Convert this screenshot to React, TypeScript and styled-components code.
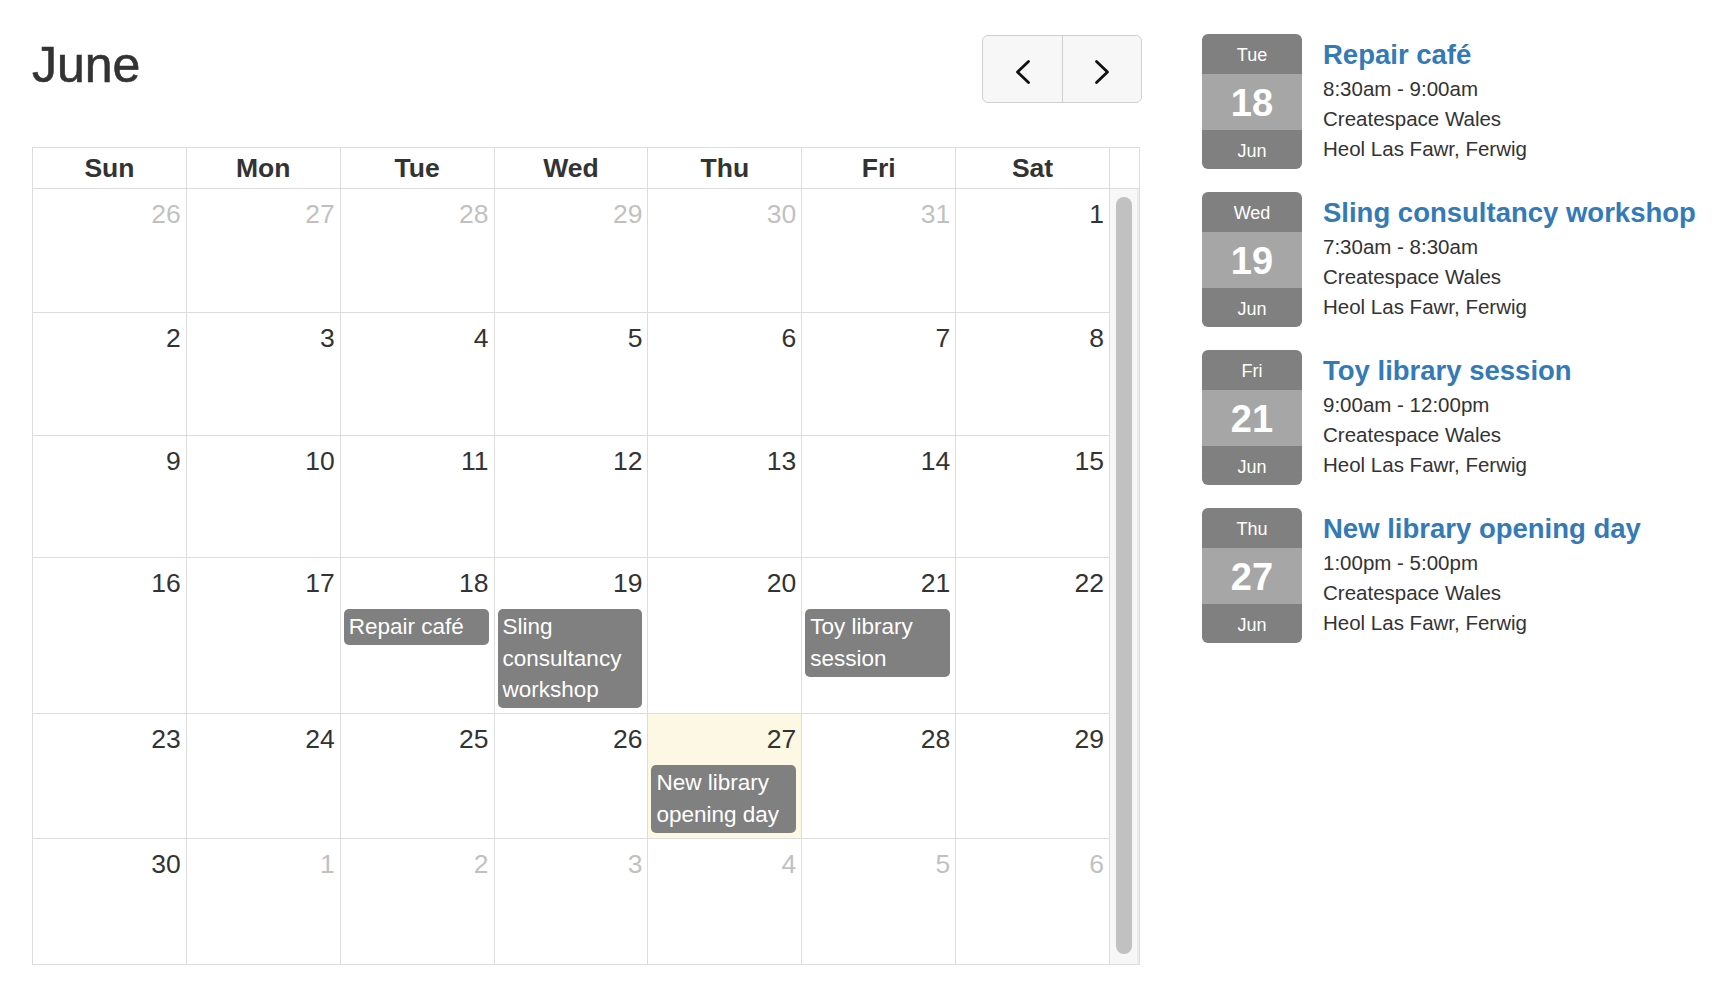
import styled, { createGlobalStyle } from 'styled-components'

type CalEvent = { title: string }
type Day = { n: number; other?: boolean; today?: boolean; events?: CalEvent[] }

const weekNames = ['Sun', 'Mon', 'Tue', 'Wed', 'Thu', 'Fri', 'Sat']

const range = (from: number, to: number, other = false): Day[] =>
  Array.from({ length: to - from + 1 }, (_, i) => ({ n: from + i, other }))

const weeks: Day[][] = [
  [...range(26, 31, true), { n: 1 }],
  range(2, 8),
  range(9, 15),
  [
    { n: 16 },
    { n: 17 },
    { n: 18, events: [{ title: 'Repair café' }] },
    { n: 19, events: [{ title: 'Sling consultancy workshop' }] },
    { n: 20 },
    { n: 21, events: [{ title: 'Toy library session' }] },
    { n: 22 }
  ],
  [
    { n: 23 },
    { n: 24 },
    { n: 25 },
    { n: 26 },
    { n: 27, today: true, events: [{ title: 'New library opening day' }] },
    { n: 28 },
    { n: 29 }
  ],
  [{ n: 30 }, ...range(1, 6, true)]
]

const upcoming = [
  { dow: 'Tue', day: 18, title: 'Repair café', time: '8:30am - 9:00am' },
  { dow: 'Wed', day: 19, title: 'Sling consultancy workshop', time: '7:30am - 8:30am' },
  { dow: 'Fri', day: 21, title: 'Toy library session', time: '9:00am - 12:00pm' },
  { dow: 'Thu', day: 27, title: 'New library opening day', time: '1:00pm - 5:00pm' }
]

const Chevron = ({ dir }: { dir: 'left' | 'right' }) => (
  <svg width="20" height="26" viewBox="0 0 20 26" fill="none">
    <polyline
      points={dir === 'left' ? '15.5,2.5 4.5,13 15.5,23.5' : '4.5,2.5 15.5,13 4.5,23.5'}
      stroke="#111"
      strokeWidth="2.8"
      strokeLinecap="round"
      strokeLinejoin="round"
    />
  </svg>
)

const App = () => {
  return (
    <Page>
      <GlobalStyle />
      <Calendar>
        <Toolbar>
          <MonthTitle>June</MonthTitle>
          <ButtonGroup>
            <NavButton aria-label="prev">
              <Chevron dir="left" />
            </NavButton>
            <NavButton aria-label="next">
              <Chevron dir="right" />
            </NavButton>
          </ButtonGroup>
        </Toolbar>
        <Table>
          <HeadRow>
            {weekNames.map((d) => (
              <HeadCell key={d}>{d}</HeadCell>
            ))}
            <HeadSpacer />
          </HeadRow>
          <Body>
            <Weeks>
              {weeks.map((week, wi) => (
                <Week key={wi}>
                  {week.map((day, di) => (
                    <DayCell key={di} $today={!!day.today}>
                      <DayNumber $other={!!day.other}>{day.n}</DayNumber>
                      {day.events?.map((ev) => (
                        <EventChip key={ev.title}>{ev.title}</EventChip>
                      ))}
                    </DayCell>
                  ))}
                </Week>
              ))}
            </Weeks>
            <ScrollTrack>
              <ScrollThumb />
            </ScrollTrack>
          </Body>
        </Table>
      </Calendar>

      <EventList>
        {upcoming.map((ev) => (
          <EventItem key={ev.title}>
            <DateBadge>
              <BadgeDow>{ev.dow}</BadgeDow>
              <BadgeDay>{ev.day}</BadgeDay>
              <BadgeMonth>Jun</BadgeMonth>
            </DateBadge>
            <EventInfo>
              <EventTitle href="#">{ev.title}</EventTitle>
              <EventLine>{ev.time}</EventLine>
              <EventLine>Createspace Wales</EventLine>
              <EventLine>Heol Las Fawr, Ferwig</EventLine>
            </EventInfo>
          </EventItem>
        ))}
      </EventList>
    </Page>
  )
}

const GlobalStyle = createGlobalStyle`
  body {
    margin: 0;
    background: #fff;
    color: #333;
    font-family: "Liberation Sans", Arial, Helvetica, sans-serif;
  }
  * {
    box-sizing: border-box;
  }
`

const Page = styled.div`
  display: flex;
  align-items: flex-start;
  gap: 62px;
  padding: 34px 0 0 32px;
`

const Calendar = styled.div`
  width: 1108px;
  flex: none;
`

const Toolbar = styled.div`
  display: flex;
  justify-content: space-between;
  align-items: flex-start;
  margin: 1px -2px 44px 0;
`

const MonthTitle = styled.h2`
  margin: 3px 0 0;
  font-size: 50px;
  font-weight: 500;
  line-height: 1.1;
  color: #333;
  -webkit-text-stroke: 0.6px #333;
`

const ButtonGroup = styled.div`
  display: flex;
  height: 68px;
  border: 1px solid #cfcfcf;
  border-radius: 6px;
  overflow: hidden;
  background: #f7f7f7;
`

const NavButton = styled.button`
  width: 79px;
  display: flex;
  align-items: center;
  justify-content: center;
  padding: 5px 0 0;
  border: none;
  background: transparent;
  cursor: pointer;
  & + & {
    border-left: 1px solid #cfcfcf;
  }
`

const Table = styled.div`
  border: 1px solid #ddd;
`

const HeadRow = styled.div`
  display: grid;
  grid-template-columns: repeat(7, 1fr) 29px;
  border-bottom: 1px solid #ddd;
`

const HeadCell = styled.div`
  height: 40px;
  line-height: 40px;
  text-align: center;
  font-size: 26.5px;
  font-weight: bold;
  color: #333;
  border-right: 1px solid #ddd;
`

const HeadSpacer = styled.div``

const Body = styled.div`
  display: flex;
`

const Weeks = styled.div`
  flex: 1;
  display: flex;
  flex-direction: column;
`

const Week = styled.div`
  display: grid;
  grid-template-columns: repeat(7, 1fr);
  min-height: 122.5px;
  border-bottom: 1px solid #ddd;
  &:first-child {
    min-height: 124px;
  }
  &:last-child {
    border-bottom: none;
    min-height: 125px;
  }
`

const DayCell = styled.div<{ $today: boolean }>`
  padding: 4px 5px 5px 3px;
  border-right: 1px solid #ddd;
  background: ${({ $today }) => ($today ? '#fcf8e3' : 'transparent')};
`

const DayNumber = styled.div<{ $other: boolean }>`
  text-align: right;
  font-size: 26.5px;
  line-height: 42px;
  color: #333;
  opacity: ${({ $other }) => ($other ? 0.3 : 1)};
`

const EventChip = styled.div`
  margin-top: 5px;
  padding: 2px 5px 2.5px;
  border-radius: 5px;
  background: #808080;
  color: #fff;
  font-size: 22.5px;
  line-height: 31.5px;
`

const ScrollTrack = styled.div`
  width: 29px;
  display: flex;
  padding: 8px 7px 10px 6px;
  background: #f7f7f7;
  box-shadow: inset -2px 0 0 #ececec;
`

const ScrollThumb = styled.div`
  flex: 1;
  border-radius: 8px;
  background: #c1c1c1;
`

const EventList = styled.div`
  display: flex;
  flex-direction: column;
  gap: 23px;
`

const EventItem = styled.div`
  display: flex;
  gap: 21px;
`

const DateBadge = styled.div`
  width: 100px;
  flex: none;
  border-radius: 6px;
  overflow: hidden;
  color: #fff;
  text-align: center;
`

const BadgeDow = styled.div`
  height: 40px;
  padding-top: 3px;
  line-height: 37px;
  font-size: 18px;
  background: #808080;
`

const BadgeDay = styled.div`
  height: 56px;
  padding-top: 3px;
  line-height: 53px;
  font-size: 38px;
  font-weight: bold;
  background: #a6a6a6;
`

const BadgeMonth = styled.div`
  height: 39px;
  padding-top: 3px;
  line-height: 36px;
  font-size: 18px;
  background: #808080;
`

const EventInfo = styled.div`
  display: flex;
  flex-direction: column;
  padding-top: 6px;
`

const EventTitle = styled.a`
  margin-bottom: 4px;
  font-size: 27.5px;
  font-weight: bold;
  line-height: 1.1;
  color: #337ab7;
  text-decoration: none;
  white-space: nowrap;
`

const EventLine = styled.div`
  font-size: 20.5px;
  line-height: 30px;
  color: #333;
`

export default App
